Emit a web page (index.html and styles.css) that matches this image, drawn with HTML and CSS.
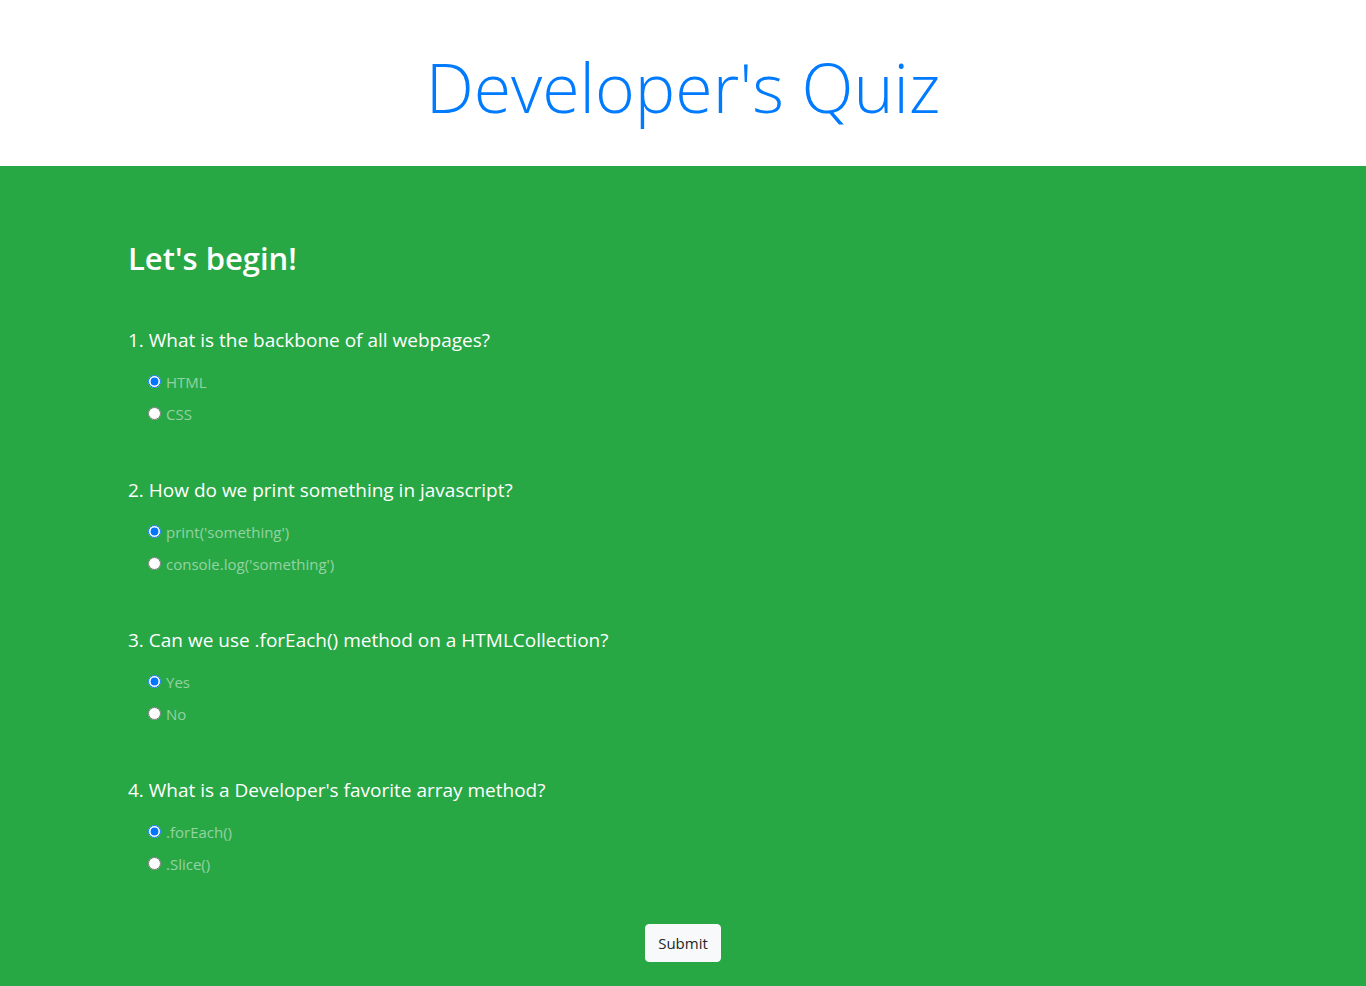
FILE: index.html
```html
<!DOCTYPE html>
<html lang="en">
<head>
<meta charset="utf-8">
<meta name="viewport" content="width=device-width, initial-scale=1">
<title>Developer's Quiz</title>
<link rel="stylesheet" href="styles.css">
</head>
<body>
<header class="intro">
  <h1 class="title">Developer's Quiz</h1>
</header>
<main class="quiz">
  <div class="container">
    <h2 class="heading">Let's begin!</h2>
    <form class="quiz-form">
      <fieldset class="question">
        <legend class="prompt">1. What is the backbone of all webpages?</legend>
        <label class="option"><input class="radio" type="radio" name="q1" value="A" checked><span>HTML</span></label>
        <label class="option"><input class="radio" type="radio" name="q1" value="B"><span>CSS</span></label>
      </fieldset>
      <fieldset class="question">
        <legend class="prompt">2. How do we print something in javascript?</legend>
        <label class="option"><input class="radio" type="radio" name="q2" value="A" checked><span>print('something')</span></label>
        <label class="option"><input class="radio" type="radio" name="q2" value="B"><span>console.log('something')</span></label>
      </fieldset>
      <fieldset class="question">
        <legend class="prompt">3. Can we use .forEach() method on a HTMLCollection?</legend>
        <label class="option"><input class="radio" type="radio" name="q3" value="A" checked><span>Yes</span></label>
        <label class="option"><input class="radio" type="radio" name="q3" value="B"><span>No</span></label>
      </fieldset>
      <fieldset class="question">
        <legend class="prompt">4. What is a Developer's favorite array method?</legend>
        <label class="option"><input class="radio" type="radio" name="q4" value="A" checked><span>.forEach()</span></label>
        <label class="option"><input class="radio" type="radio" name="q4" value="B"><span>.Slice()</span></label>
      </fieldset>
      <button class="submit" type="submit">Submit</button>
    </form>
  </div>
</main>
</body>
</html>
```

FILE: styles.css
```css
*, *::before, *::after {
  box-sizing: border-box;
}

body {
  display: flex;
  flex-direction: column;
  min-height: 100vh;
  margin: 0;
  font-family: "Segoe UI", "Open Sans", "Noto Sans", sans-serif;
  font-size: 15px;
  line-height: 24px;
}

.intro {
  padding: 44px 16px 36px;
  background: #fff;
  text-align: center;
}

.title {
  margin: 0;
  color: #007bff;
  font-size: 68px;
  font-weight: 300;
  line-height: 86px;
}

.quiz {
  flex: 1;
  padding: 72px 16px 24px;
  background: #28a745;
}

.container {
  max-width: 1110px;
  margin: 0 auto;
}

.heading {
  margin: 0 0 48px;
  color: #fff;
  font-size: 31px;
  font-weight: 600;
  line-height: 40px;
}

.quiz-form {
  display: flex;
  flex-direction: column;
}

.question {
  min-width: 0;
  margin: 0 0 50px;
  padding: 0;
  border: 0;
}

.question:last-of-type {
  margin-bottom: 48px;
}

.prompt {
  margin-bottom: 16px;
  padding: 0;
  color: #fff;
  font-size: 19px;
  line-height: 28px;
}

.option {
  display: flex;
  align-items: center;
  gap: 5px;
  width: max-content;
  margin: 0 0 8px 20px;
  color: rgba(255, 255, 255, 0.5);
}

.option:last-child {
  margin-bottom: 0;
}

.radio {
  width: 13px;
  height: 13px;
  margin: 0 0 2px;
}

.submit {
  align-self: center;
  padding: 6px 12px;
  border: 1px solid #f8f9fa;
  border-radius: 4px;
  background: #f8f9fa;
  color: #212529;
  font: inherit;
}
```
